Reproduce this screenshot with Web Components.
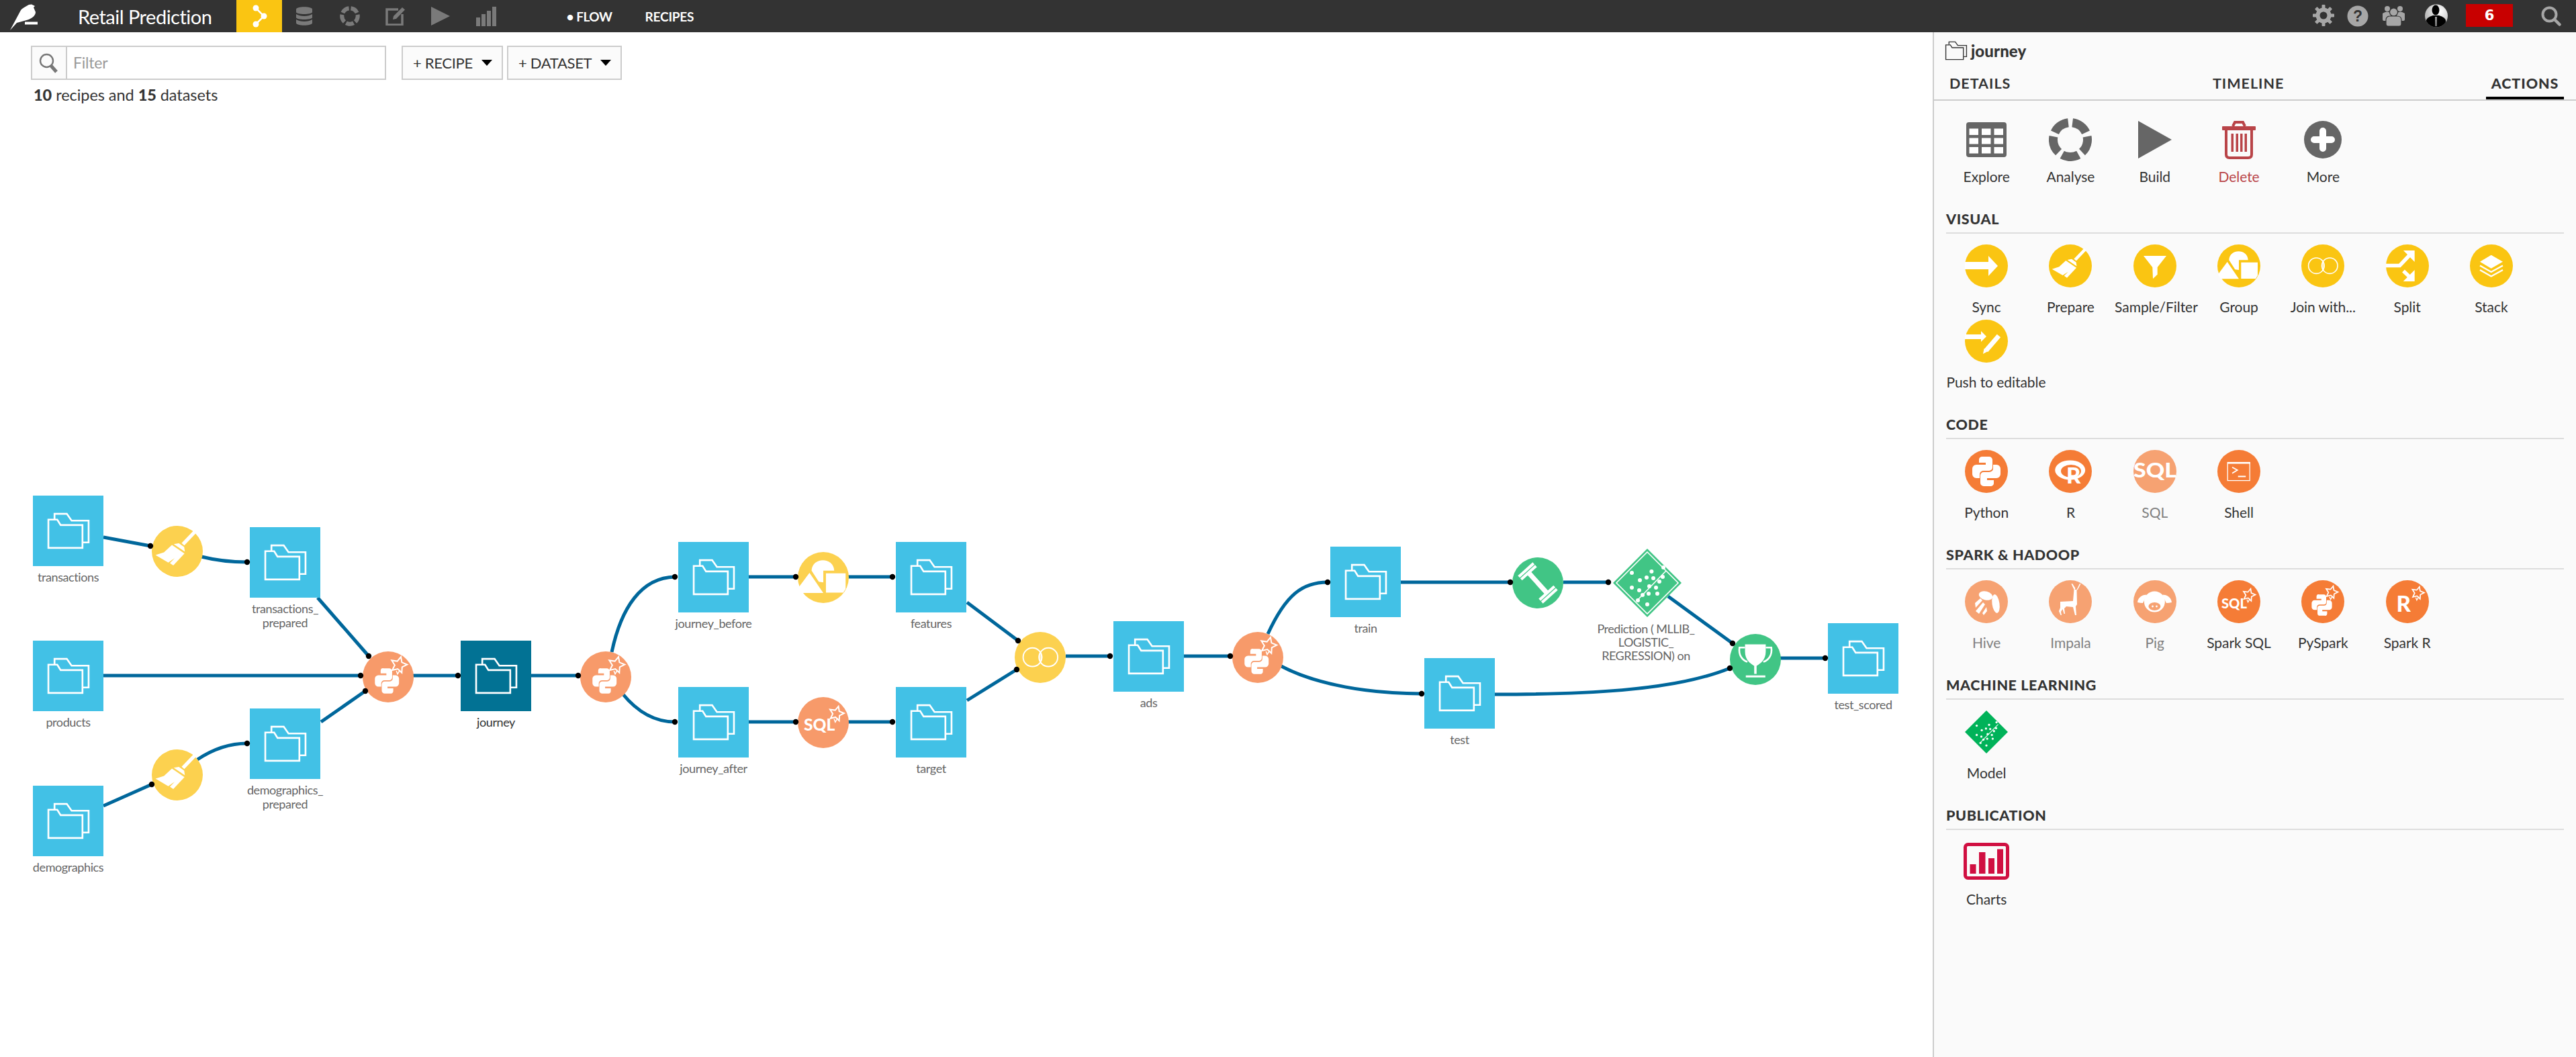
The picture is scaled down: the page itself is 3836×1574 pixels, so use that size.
<!DOCTYPE html>
<html lang="en"><head><meta charset="utf-8"><title>Retail Prediction</title>
<style>
html,body{margin:0;padding:0;height:100%;overflow:hidden;background:#fff;font-family:Lato,"Liberation Sans",sans-serif}
</style></head><body>
<dss-app></dss-app>
<script>
const FONT='Lato,"Liberation Sans",sans-serif';
function star(cx,cy,r){let p=[];for(let i=0;i<10;i++){const a=(-75+i*36)*Math.PI/180,q=i%2?r*.48:r;p.push((cx+q*Math.cos(a)).toFixed(1)+','+(cy+q*Math.sin(a)).toFixed(1));}
 return `<polygon points="${p.join(' ')}" fill="none" stroke="#fff" stroke-width="1.7"/><path d="M${cx-3},${cy+r*.7} l1.5,4 l3,-5" fill="none" stroke="#fff" stroke-width="1.3"/>`;}
const PY_HALF='M26 10h10a5 5 0 0 1 5 5v11a5 5 0 0 1-5 5h-8a6 5 0 0 0-6 5v6h-5a6 6 0 0 1-6-6v-8a6 6 0 0 1 6-6h14v-3h-10v-5a4.5 4.5 0 0 1 5-4z';
const py=`<path d="${PY_HALF}" fill="#fff"/><path d="${PY_HALF}" fill="#fff" transform="rotate(180 32 32)"/>`;
const pySmall=`<g transform="translate(30.5 37) scale(.72) translate(-32 -32)">${py}</g>`;
const T=(x,y,s,t,len)=>`<text x="${x}" y="${y}" font-family='Lato,"Liberation Sans",sans-serif' font-weight="900" font-size="${s}" fill="#fff"${len?` textLength="${len}" lengthAdjust="spacingAndGlyphs"`:''}>${t}</text>`;
const GLYPHS={
 sync:`<polygon fill="#fff" points="0,26 35,26 35,17 49,32 35,47 35,37 0,37"/>`,
 prepare:`<g fill="#fff"><polygon points="52.7,5.6 55.8,8.8 40.8,24.6 37.4,21.6"/><polygon points="27.5,23 34,21.8 40.6,26.6 41.5,32.5"/><polygon points="25.3,24 41,34.7 27,49.7 22.7,46.7 28.7,40.7 20.7,46 4.7,36.7 15.3,33.3"/></g>`,
 filter:`<polygon fill="#fff" points="15,17 49,17 35.7,34 35.7,44.7 29,51 28.3,34"/>`,
 group:`<g fill="#fff"><path d="M17.3,23.3C18,6 45,6 45.7,23.3H32V38L26.3,37.3Z"/><polygon points="14.7,26 32,51.3 5,51.3 1,44.5"/><polygon points="35.3,26.7 60,26.7 60,46 57,51 35.3,51"/></g>`,
 join:`<g fill="none" stroke="#fff" stroke-width="1.6"><circle cx="22.3" cy="31.7" r="11.7"/><circle cx="42.3" cy="31.7" r="11.7"/></g><path d="M32.3,24.5C28.8,28.5 28.8,35 32.3,39C35.8,35 35.8,28.5 32.3,24.5Z" fill="#fff" opacity=".55"/>`,
 split:`<g fill="#fff"><polygon points="26,9 42.7,9 42.7,26"/><polygon points="42.7,38 42.7,55 25.7,55"/></g><path d="M0,31.5H20.5L36,15M26,39.5L37,50" fill="none" stroke="#fff" stroke-width="5.5"/>`,
 stack:`<polygon fill="#fff" points="31.7,15.7 49,25.7 31.7,35.7 15,25.7"/><path d="M15,31.5L31.7,41L49,31.5M15,38L31.7,47.5L49,38" fill="none" stroke="#fff" stroke-width="2.4"/>`,
 push:`<polygon fill="#fff" points="0,22 24,22 24,17 32,25 24,33 24,29 0,29"/><path d="M50.5,24 L31.5,46" stroke="#fff" stroke-width="7"/><polygon fill="#fff" points="27,51 28.5,43 33.5,47.5"/>`,
 python:py,
 r:`<path fill-rule="evenodd" fill="#fff" d="M9.2,30a22.5,14.5 0 1 0 45,0a22.5,14.5 0 1 0 -45,0ZM18,31.5a15,9.5 0 1 1 30,0a15,9.5 0 1 1 -30,0Z"/>${T(26,49.5,33,'R')}`,
 sql:T(0,41,31,'SQL',64),
 shell:`<rect x="15.2" y="18.6" width="33" height="27" fill="none" stroke="#fff" stroke-width="1.3"/><rect x="15" y="18" width="34" height="2.6" fill="#fff"/><path d="M22,25.7L29.7,30L22,34.7" fill="none" stroke="#fff" stroke-width="1.8"/><rect x="30.7" y="38.5" width="11.5" height="2" fill="#fff"/>`,
 hive:`<g fill="#fff"><ellipse cx="31" cy="23" rx="10.5" ry="6.5" transform="rotate(15 31 23)"/><ellipse cx="46" cy="35" rx="5.5" ry="14" transform="rotate(-8 46 35)"/><path d="M15,34L23,27L26,30L16,41ZM16,46L27,33L30,36L21,50ZM26,49L32,40L33,46L28,52Z"/></g>`,
 impala:`<g fill="#fff"><path d="M17,32L36,31L37.5,14H41.5L42,36L40,39L41,52H39L36,40L26,39L23,42L24,50H22.5L20.5,43L18,47L19,52H17.5L15,46L17,41Z"/><path d="M38,15L33.5,5.5L35,5L39.5,12ZM41,15L46,5L47.5,5.5L43,14Z"/></g>`,
 pig:`<g fill="#fff"><circle cx="31.4" cy="32" r="15.5"/><path d="M6,33C7,25 14,21 20,22L14,34Q10,34 6,33ZM57,33C56,25 49,21 43,22L49,34Q53,34 57,33Z"/></g><ellipse cx="31.4" cy="39" rx="9" ry="6" fill="var(--c)"/><circle cx="28.5" cy="39" r="1.4" fill="#fff"/><circle cx="34.5" cy="39" r="1.4" fill="#fff"/>`,
 sparksql:T(6,42,20,'SQL',38)+star(47,22,9.5),
 pyspark:pySmall+star(45,18,9.5),
 sparkr:T(15.5,47,33,'R')+star(47.4,19,9.5),
 pysparkflow:pySmall+star(45.3,17,10.5),
 sqlstar:T(7.5,42,21,'SQL',39)+star(48.5,20.8,9.5),
 train:`<g fill="#fff" transform="rotate(48 32 32)"><rect x="15" y="29" width="34" height="6"/><rect x="8.5" y="19.5" width="3.5" height="25"/><rect x="13" y="19.5" width="3.5" height="25"/><rect x="47.5" y="19.5" width="3.5" height="25"/><rect x="52" y="19.5" width="3.5" height="25"/></g>`,
 trophy:`<path fill="#fff" d="M19,13H45V22C45,33 38,37 33.5,40V50H30.5V40C26,37 19,33 19,22ZM20,52H44.5V54.5H20Z"/><path d="M19,17H12C10.5,27 16,33 22,35M45,17H52C53.5,27 48,33 42,35" fill="none" stroke="#fff" stroke-width="2.2"/>`
};
function circleIcon(name,color,size){return `<svg width="${size}" height="${size}" viewBox="0 0 64 64" style="--c:${color};display:block;overflow:visible"><circle cx="32" cy="32" r="32" fill="${color}"/>${GLYPHS[name]}</svg>`;}
const DOTS=[[-23,-15],[6.4,-17],[-11,-4],[-1,-8],[9,-7],[23,-9],[18,-2],[3,5],[13,7],[-23,7],[-12,11],[-7,18],[2,16],[15,16],[-14,26],[0,32],[24,-23]];
function diamond(w,color,outline){const dots=DOTS.map(d=>`<circle cx="${d[0]}" cy="${d[1]}" r="${outline?3:2.6}" fill="#fff"/>`).join('');
 return `<svg width="${w}" height="${w}" viewBox="-51 -51 102 102" style="display:block"><polygon points="0,-51 51,0 0,51 -51,0" fill="${color}"/>${outline?'<polygon points="0,-46 46,0 0,46 -46,0" fill="none" stroke="#fff" stroke-width="1.6"/>':''}<path d="M-16,27L28,-18" stroke="#fff" stroke-width="1.6"/>${dots}</svg>`;}
const TOP={
 explore:`<svg width="60" height="52" viewBox="0 0 60 52" style="display:block"><rect width="60" height="52" rx="4" fill="#666"/><g fill="#fff"><rect x="4.5" y="9.5" width="13.5" height="9.5"/><rect x="23" y="9.5" width="13.5" height="9.5"/><rect x="41.5" y="9.5" width="13.5" height="9.5"/><rect x="4.5" y="23.5" width="13.5" height="9"/><rect x="23" y="23.5" width="13.5" height="9"/><rect x="41.5" y="23.5" width="13.5" height="9"/><rect x="4.5" y="37" width="13.5" height="9.5"/><rect x="23" y="37" width="13.5" height="9.5"/><rect x="41.5" y="37" width="13.5" height="9.5"/></g></svg>`,
 analyse:`<svg width="64" height="64" viewBox="0 0 64 64" style="display:block"><circle cx="32" cy="32" r="25.5" fill="none" stroke="#666" stroke-width="13" pathLength="100" stroke-dasharray="16 4" transform="rotate(-82.8 32 32)"/></svg>`,
 build:`<svg width="50" height="56" viewBox="0 0 50 56" style="display:block"><polygon points="0,0 50,28 0,56" fill="#666"/></svg>`,
 del:`<svg width="50" height="57" viewBox="0 0 50 57" style="display:block"><g fill="none" stroke="#b94448" stroke-width="4"><path d="M16,8L19,2H31L34,8"/><path d="M6,12V50Q6,55 11,55H39Q44,55 44,50V12"/></g><rect y="8" width="50" height="6" rx="1" fill="#b94448"/><g fill="#b94448"><rect x="13.5" y="19" width="3.5" height="27"/><rect x="20.5" y="19" width="3.5" height="27"/><rect x="27" y="19" width="3.5" height="27"/><rect x="33.5" y="19" width="3.5" height="27"/></g></svg>`,
 more:`<svg width="56" height="56" viewBox="0 0 56 56" style="display:block"><circle cx="28" cy="28" r="28" fill="#666"/><path d="M28,15V41M15,28H41" stroke="#fff" stroke-width="10" stroke-linecap="round"/></svg>`,
 model:diamond(64,'#00b259',false),
 charts:`<svg width="68" height="55" viewBox="0 0 68 55" style="display:block"><rect x="2.5" y="2.5" width="63" height="50" rx="4" fill="none" stroke="#d00f41" stroke-width="5"/><g fill="#d00f41"><rect x="9.5" y="32" width="9" height="14"/><rect x="23" y="14" width="9.5" height="32"/><rect x="37" y="23" width="9" height="23"/><rect x="50" y="9.5" width="9" height="36.5"/></g></svg>`
};
const FOLDER=(c,w,h)=>`<svg width="${w}" height="${h}" viewBox="20 26 65 54" style="display:block;flex:none"><g fill="none" stroke="${c}" stroke-width="2.6"><path d="M23,36.5H36L41,44.5H73V78H23Z"/><path d="M32,36V28H50L57,38H82V70H74"/></g></svg>`;

function mk(name,css,html,extra){customElements.define(name,class extends HTMLElement{constructor(){super();const r=this.attachShadow({mode:'open'});r.innerHTML=`<style>${css}</style>`+(typeof html==='function'?html(this):html);if(extra)extra(this,r);}});}

const gear=(()=>{let t='';for(let i=0;i<8;i++)t+=`<rect x="13.5" y="0" width="5" height="7" rx="1" transform="rotate(${i*45} 16 16)"/>`;return `<svg width="32" height="32" viewBox="0 0 32 32"><g fill="#a6a6a6">${t}</g><circle cx="16" cy="16" r="8.5" fill="none" stroke="#a6a6a6" stroke-width="6"/></svg>`;})();

mk('dss-topbar',`
:host{display:flex;align-items:center;height:48px;background:#333;color:#fff;flex:none;font-family:${FONT}}
.logo{width:116px;flex:none;height:48px}
.title{width:236px;flex:none;font-size:29px;letter-spacing:-.5px;color:#fff}
.tab{width:67.6px;height:48px;display:flex;align-items:center;justify-content:center;flex:none}
.on{background:#fac512}
.links{display:flex;margin-left:86px;font-size:19px;font-weight:700;letter-spacing:-.2px;color:#fff}
.links span:first-child{width:117px;letter-spacing:-.5px}
.right{margin-left:auto;position:relative;width:420px;height:48px;flex:none}
.right>*{position:absolute}
.badge{left:256px;top:6px;width:70px;height:34px;background:#c80000;color:#fff;font:700 21px "DejaVu Sans",sans-serif;display:flex;align-items:center;justify-content:center}
`,`
<div class="logo"><svg width="116" height="48" viewBox="0 0 116 48" style="display:block"><path fill="#fff" d="M15,45L30,17C32,12 40,9 43,7L47,6.5L52,9L50,11L53,18C53,24 46,29 36,31L25,34Z"/><rect x="37" y="32.5" width="19" height="4" fill="#fff"/></svg></div>
<div class="title">Retail Prediction</div>
<div class="tab on"><svg width="28" height="36" viewBox="0 0 28 36"><g fill="#fff"><circle cx="9" cy="6" r="4.5"/><circle cx="21" cy="18" r="4.5"/><circle cx="9" cy="30" r="4.5"/></g><path d="M9,6L21,18L9,30" fill="none" stroke="#fff" stroke-width="2.5"/></svg></div>
<div class="tab"><svg width="24" height="28" viewBox="0 0 24 28"><g fill="#7a7a7a"><path d="M0,4C0,-1 24,-1 24,4V8C24,12 0,12 0,8Z"/><path d="M0,11C6,15 18,15 24,11V16C24,20 0,20 0,16Z"/><path d="M0,19C6,23 18,23 24,19V24C24,29 0,29 0,24Z"/></g></svg></div>
<div class="tab"><svg width="30" height="30" viewBox="0 0 64 64"><circle cx="32" cy="32" r="25" fill="none" stroke="#7a7a7a" stroke-width="13" pathLength="100" stroke-dasharray="16 4" transform="rotate(-82.8 32 32)"/></svg></div>
<div class="tab"><svg width="30" height="28" viewBox="0 0 30 28"><path d="M19,4H2V27H25V11" fill="none" stroke="#7a7a7a" stroke-width="3.5"/><path d="M11,19L12,14L25,1L29,4.5L16,18Z" fill="#7a7a7a"/></svg></div>
<div class="tab"><svg width="28" height="28" viewBox="0 0 28 28"><polygon points="0,0 28,14 0,28" fill="#7a7a7a"/></svg></div>
<div class="tab"><svg width="30" height="29" viewBox="0 0 30 29"><g fill="#7a7a7a"><rect y="16" width="6" height="13"/><rect x="8" y="11" width="6" height="18"/><rect x="16" y="6" width="6" height="23"/><rect x="24" y="0" width="6" height="29"/></g></svg></div>
<div class="links"><span>&bull; FLOW</span><span>RECIPES</span></div>
<div class="right">
 <div style="left:28px;top:7px">${gear}</div>
 <svg style="left:79px;top:8px" width="32" height="32" viewBox="0 0 32 32"><circle cx="16" cy="16" r="15.5" fill="#a6a6a6"/><text x="16" y="24" text-anchor="middle" font-family="Liberation Sans" font-weight="700" font-size="23" fill="#333">?</text></svg>
 <svg style="left:132px;top:8px" width="33" height="31" viewBox="0 0 33 31"><g fill="#a6a6a6"><circle cx="7" cy="5" r="4"/><circle cx="26" cy="5" r="4"/><path d="M0,12Q7,7 12,12V23H2Q0,23 0,21ZM33,12Q26,7 21,12V23H31Q33,23 33,21Z"/></g><g fill="#a6a6a6" stroke="#333" stroke-width="1.2"><circle cx="16.5" cy="10" r="6"/><path d="M5,22Q5,16 11,16H22Q28,16 28,22V28Q28,31 25,31H8Q5,31 5,28Z"/></g></svg>
 <svg style="left:195px;top:6px" width="34" height="35" viewBox="0 0 34 35"><defs><radialGradient id="av" cx=".65" cy=".3" r=".8"><stop offset="0" stop-color="#fff"/><stop offset="1" stop-color="#aaa"/></radialGradient><clipPath id="avc"><circle cx="17" cy="17.5" r="17"/></clipPath></defs><circle cx="17" cy="17.5" r="17" fill="url(#av)"/><g clip-path="url(#avc)"><ellipse cx="16" cy="9" rx="5.5" ry="7.5" fill="#000"/><path d="M2,35V24Q3,20 12,17H21Q30,20 31,24V35Z" fill="#000"/><path d="M15,19H18L17.6,33H15.5Z" fill="#999"/></g></svg>
 <div class="badge">6</div>
 <svg style="left:368px;top:9px" width="30" height="30" viewBox="0 0 30 30"><circle cx="12.5" cy="12.5" r="10" fill="none" stroke="#a6a6a6" stroke-width="4"/><path d="M20,20L27.5,27.5" stroke="#a6a6a6" stroke-width="4.5" stroke-linecap="round"/></svg>
</div>`);

mk('dss-toolbar',`
:host{display:block;position:relative;padding:20px 0 0 46px;color:#333;font-family:${FONT}}
.row{display:flex;height:51px}
.filter{width:529px;box-sizing:border-box;border:2px solid #ccc;display:flex;background:#fff}
.addon{width:50px;border-right:2px solid #ccc;background:#fbfbfb;display:flex;align-items:center;justify-content:center;flex:none}
.ph{color:#999;font-size:23px;padding-left:9px;line-height:47px;letter-spacing:-.2px}
.btn{box-sizing:border-box;border:2px solid #ccc;background:#fbfbfb;display:flex;align-items:center;font-size:22px;letter-spacing:-.3px;color:#333;padding-left:15px}
.btn i{width:0;height:0;border-left:8px solid transparent;border-right:8px solid transparent;border-top:9px solid #000;margin-left:13px}
.b1{width:151px;margin-left:23px}.b2{width:171px;margin-left:6px}
.count{margin:10px 0 0 4px;font-size:23.5px;line-height:24px;letter-spacing:-.05px}
b{font-weight:900}
`,`<div class="row"><div class="filter"><div class="addon"><svg width="30" height="30" viewBox="0 0 30 30"><circle cx="11.5" cy="11.5" r="9.5" fill="none" stroke="#777" stroke-width="2.4"/><path d="M18,19L26,28" stroke="#777" stroke-width="5"/></svg></div><div class="ph">Filter</div></div>
<div class="btn b1">+ RECIPE<i></i></div><div class="btn b2">+ DATASET<i></i></div></div>
<div class="count"><b>10</b> recipes and <b>15</b> datasets</div>`);

mk('dss-dataset',`
:host{position:absolute;display:block;width:105px;font-family:${FONT}}
.sq{width:105px;height:105px;background:var(--bg,#42c1e6);display:flex;align-items:center;justify-content:center}
.lb{position:absolute;left:-50px;width:205px;top:111px;text-align:center;font-size:18px;line-height:20.5px;color:var(--tx,#666);letter-spacing:-.4px}
`,`<div class="sq">${FOLDER('#fff',66,55)}</div><div class="lb"><slot></slot></div>`,(el)=>{el.style.left=el.getAttribute('x')+'px';el.style.top=(el.getAttribute('y')-48)+'px';if(el.hasAttribute('selected')){el.style.setProperty('--bg','#027294');el.style.setProperty('--tx','#333');}});

mk('dss-recipe',`:host{position:absolute;display:block;width:76px;height:76px}`,(el)=>circleIcon(el.getAttribute('icon'),el.getAttribute('color'),76),(el)=>{el.style.left=(el.getAttribute('cx')-38)+'px';el.style.top=(el.getAttribute('cy')-38-48)+'px';});

mk('dss-model',`
:host{position:absolute;display:block;width:102px;font-family:${FONT}}
.lb{position:absolute;left:-51px;width:200px;top:109px;text-align:center;font-size:18px;line-height:20px;color:#666;letter-spacing:-.5px}
`,()=>diamond(102,'#41c585',true)+`<div class="lb"><slot></slot></div>`,(el)=>{el.style.left=(el.getAttribute('cx')-51)+'px';el.style.top=(el.getAttribute('cy')-51-48)+'px';});

const EDGES=[
'M154,800L224,813','M300,829C320,834 340,837 368,837','M473,890L549,977','M154,1006H537','M478,1075L544,1029',
'M154,1200L226,1168','M294,1131C315,1117 340,1107 368,1107','M615,1006H682','M791,1006H861',
'M911,971C925,905 955,860 1005,859','M927,1033C945,1055 970,1075 1005,1075','M1115,859H1185','M1263,859H1329','M1115,1075H1185','M1263,1075H1329',
'M1440,897L1516,954','M1440,1043L1514,997','M1587,977H1653','M1763,977H1832','M1888,944C1915,885 1940,867 1977,867',
'M1906,991C1960,1020 2040,1033 2117,1033','M2086,867H2249','M2328,867H2395','M2484,888L2580,958','M2226,1034C2350,1034 2490,1030 2576,995','M2650,980H2718'];
const EDOTS=[[224,813],[368,837],[549,977],[537,1006],[544,1029],[226,1168],[368,1107],[682,1006],[861,1006],[1005,859],[1005,1075],[1185,859],[1329,859],[1185,1075],[1329,1075],[1516,954],[1514,997],[1653,977],[1832,977],[1977,867],[2117,1033],[2249,867],[2395,867],[2580,958],[2576,995],[2718,980]];
mk('dss-canvas',`
:host{position:absolute;left:0;top:0;right:0;bottom:0;display:block;overflow:hidden}
svg{position:absolute;left:0;top:0}
`,`<svg width="2878" height="1526" viewBox="0 48 2878 1526"><g fill="none" stroke="#00679b" stroke-width="5">${EDGES.map(d=>`<path d="${d}"/>`).join('')}</g></svg><slot></slot><svg width="2878" height="1526" viewBox="0 48 2878 1526" style="pointer-events:none"><g fill="#000">${EDOTS.map(d=>`<circle cx="${d[0]}" cy="${d[1]}" r="4.2"/>`).join('')}</g></svg>`);

const Y='#fcd14f',O='#f79a6a',G='#41c585';
mk('dss-flow',`:host{display:block;position:relative;flex:1;min-width:0;background:#fff}`,`
<dss-canvas>
<dss-dataset x="49" y="738">transactions</dss-dataset>
<dss-dataset x="372" y="785">transactions_<br>prepared</dss-dataset>
<dss-dataset x="49" y="954">products</dss-dataset>
<dss-dataset x="686" y="954" selected>journey</dss-dataset>
<dss-dataset x="49" y="1170">demographics</dss-dataset>
<dss-dataset x="372" y="1055">demographics_<br>prepared</dss-dataset>
<dss-dataset x="1010" y="807">journey_before</dss-dataset>
<dss-dataset x="1334" y="807">features</dss-dataset>
<dss-dataset x="1010" y="1023">journey_after</dss-dataset>
<dss-dataset x="1334" y="1023">target</dss-dataset>
<dss-dataset x="1658" y="925">ads</dss-dataset>
<dss-dataset x="1981" y="814">train</dss-dataset>
<dss-dataset x="2121" y="980">test</dss-dataset>
<dss-dataset x="2722" y="928">test_scored</dss-dataset>
<dss-recipe cx="264" cy="821" icon="prepare" color="${Y}"></dss-recipe>
<dss-recipe cx="264" cy="1154" icon="prepare" color="${Y}"></dss-recipe>
<dss-recipe cx="578" cy="1008" icon="pysparkflow" color="${O}"></dss-recipe>
<dss-recipe cx="902" cy="1008" icon="pysparkflow" color="${O}"></dss-recipe>
<dss-recipe cx="1226" cy="860" icon="group" color="${Y}"></dss-recipe>
<dss-recipe cx="1226" cy="1076" icon="sqlstar" color="${O}"></dss-recipe>
<dss-recipe cx="1549" cy="979" icon="join" color="${Y}"></dss-recipe>
<dss-recipe cx="1873" cy="979" icon="pysparkflow" color="${O}"></dss-recipe>
<dss-recipe cx="2290" cy="868" icon="train" color="${G}"></dss-recipe>
<dss-recipe cx="2614" cy="982" icon="trophy" color="${G}"></dss-recipe>
<dss-model cx="2453" cy="868">Prediction ( MLLIB_<br>LOGISTIC_<br>REGRESSION) on</dss-model>
</dss-canvas>
<dss-toolbar></dss-toolbar>`);

mk('dss-action',`
:host{display:block;width:125.3px;box-sizing:border-box;padding:0 3px;font-family:${FONT};color:var(--lab,#333)}
.ic{height:var(--ih,64px);display:flex;align-items:var(--ia,center);justify-content:center;margin-bottom:var(--ig,16px)}
.lb{font-size:21px;line-height:26px;height:26px;white-space:nowrap;text-align:center;letter-spacing:-.05px;margin-bottom:var(--im,6px)}
`,(el)=>{const i=el.getAttribute('icon'),c=el.getAttribute('tone');const g=c?circleIcon(i,c,64):TOP[i];return `<div class="ic">${g}</div><div class="lb"><slot></slot></div>`;},
(el)=>{const k=el.getAttribute('kind');if(k==='dim')el.style.setProperty('--lab','#808080');if(k==='red')el.style.setProperty('--lab','#b94448');
 if(k==='top'||k==='red'){el.style.setProperty('--ig','10px');}
 if(k==='chart'){el.style.setProperty('--ih','58px');el.style.setProperty('--ia','flex-end');}});

mk('dss-section',`
:host{display:block;margin-top:31px;font-family:${FONT}}
h3{margin:0 0 16px;font-size:21.5px;line-height:26px;font-weight:900;color:#333;padding-bottom:7px;border-bottom:2px solid #ddd;letter-spacing:.6px}
.g{display:grid;grid-template-columns:repeat(7,125.3px);margin-left:-2.5px}
`,(el)=>`<h3>${el.getAttribute('title')}</h3><div class="g"><slot></slot></div>`);

const Yp='#fac512',Op='#f57c36',Ol='#f6a272';
mk('dss-panel',`
:host{display:block;width:958px;flex:none;box-sizing:border-box;border-left:2px solid #ccc;background:#fafafa;font-family:${FONT};color:#333}
.head{height:54px;display:flex;align-items:center;padding:0 0 0 16px;gap:5px;box-sizing:border-box}
.head b{font-size:24px;font-weight:900;letter-spacing:.1px}
.tabs{height:46px;display:flex;justify-content:space-between;padding:0 18px 0 23px;border-bottom:2px solid #ccc}
.tab{font-size:21.5px;font-weight:700;letter-spacing:1px;line-height:44px;color:#333;height:46px;box-sizing:border-box}
.act{width:116px;text-align:center;border-bottom:4px solid #000;font-weight:900;letter-spacing:.9px}
.body{padding:26px 18px 0}
.top{display:grid;grid-template-columns:repeat(7,125.3px);margin-left:-2.5px;margin-bottom:37px}
.top dss-action{height:100px}
dss-section:first-of-type{margin-top:0}
`,`
<div class="head">${FOLDER('#333',34,29)}<b>journey</b></div>
<div class="tabs"><div class="tab">DETAILS</div><div class="tab">TIMELINE</div><div class="tab act">ACTIONS</div></div>
<div class="body">
<div class="top">
<dss-action icon="explore" kind="top">Explore</dss-action><dss-action icon="analyse" kind="top">Analyse</dss-action><dss-action icon="build" kind="top">Build</dss-action><dss-action icon="del" kind="red">Delete</dss-action><dss-action icon="more" kind="top">More</dss-action>
</div>
<dss-section title="VISUAL">
<dss-action icon="sync" tone="${Yp}">Sync</dss-action><dss-action icon="prepare" tone="${Yp}">Prepare</dss-action><dss-action icon="filter" tone="${Yp}">Sample/Filter</dss-action><dss-action icon="group" tone="${Yp}">Group</dss-action><dss-action icon="join" tone="${Yp}">Join with...</dss-action><dss-action icon="split" tone="${Yp}">Split</dss-action><dss-action icon="stack" tone="${Yp}">Stack</dss-action><dss-action icon="push" tone="${Yp}">Push to editable</dss-action>
</dss-section>
<dss-section title="CODE">
<dss-action icon="python" tone="${Op}">Python</dss-action><dss-action icon="r" tone="${Op}">R</dss-action><dss-action icon="sql" tone="${Ol}" kind="dim">SQL</dss-action><dss-action icon="shell" tone="${Op}">Shell</dss-action>
</dss-section>
<dss-section title="SPARK &amp; HADOOP">
<dss-action icon="hive" tone="${Ol}" kind="dim">Hive</dss-action><dss-action icon="impala" tone="${Ol}" kind="dim">Impala</dss-action><dss-action icon="pig" tone="${Ol}" kind="dim">Pig</dss-action><dss-action icon="sparksql" tone="${Op}">Spark SQL</dss-action><dss-action icon="pyspark" tone="${Op}">PySpark</dss-action><dss-action icon="sparkr" tone="${Op}">Spark R</dss-action>
</dss-section>
<dss-section title="MACHINE LEARNING"><dss-action icon="model">Model</dss-action></dss-section>
<dss-section title="PUBLICATION"><dss-action icon="charts" kind="chart">Charts</dss-action></dss-section>
</div>`);

mk('dss-app',`:host{display:flex;flex-direction:column;height:100vh}.main{flex:1;display:flex;min-height:0}`,`<dss-topbar></dss-topbar><div class="main"><dss-flow></dss-flow><dss-panel></dss-panel></div>`);
</script>
</body></html>
